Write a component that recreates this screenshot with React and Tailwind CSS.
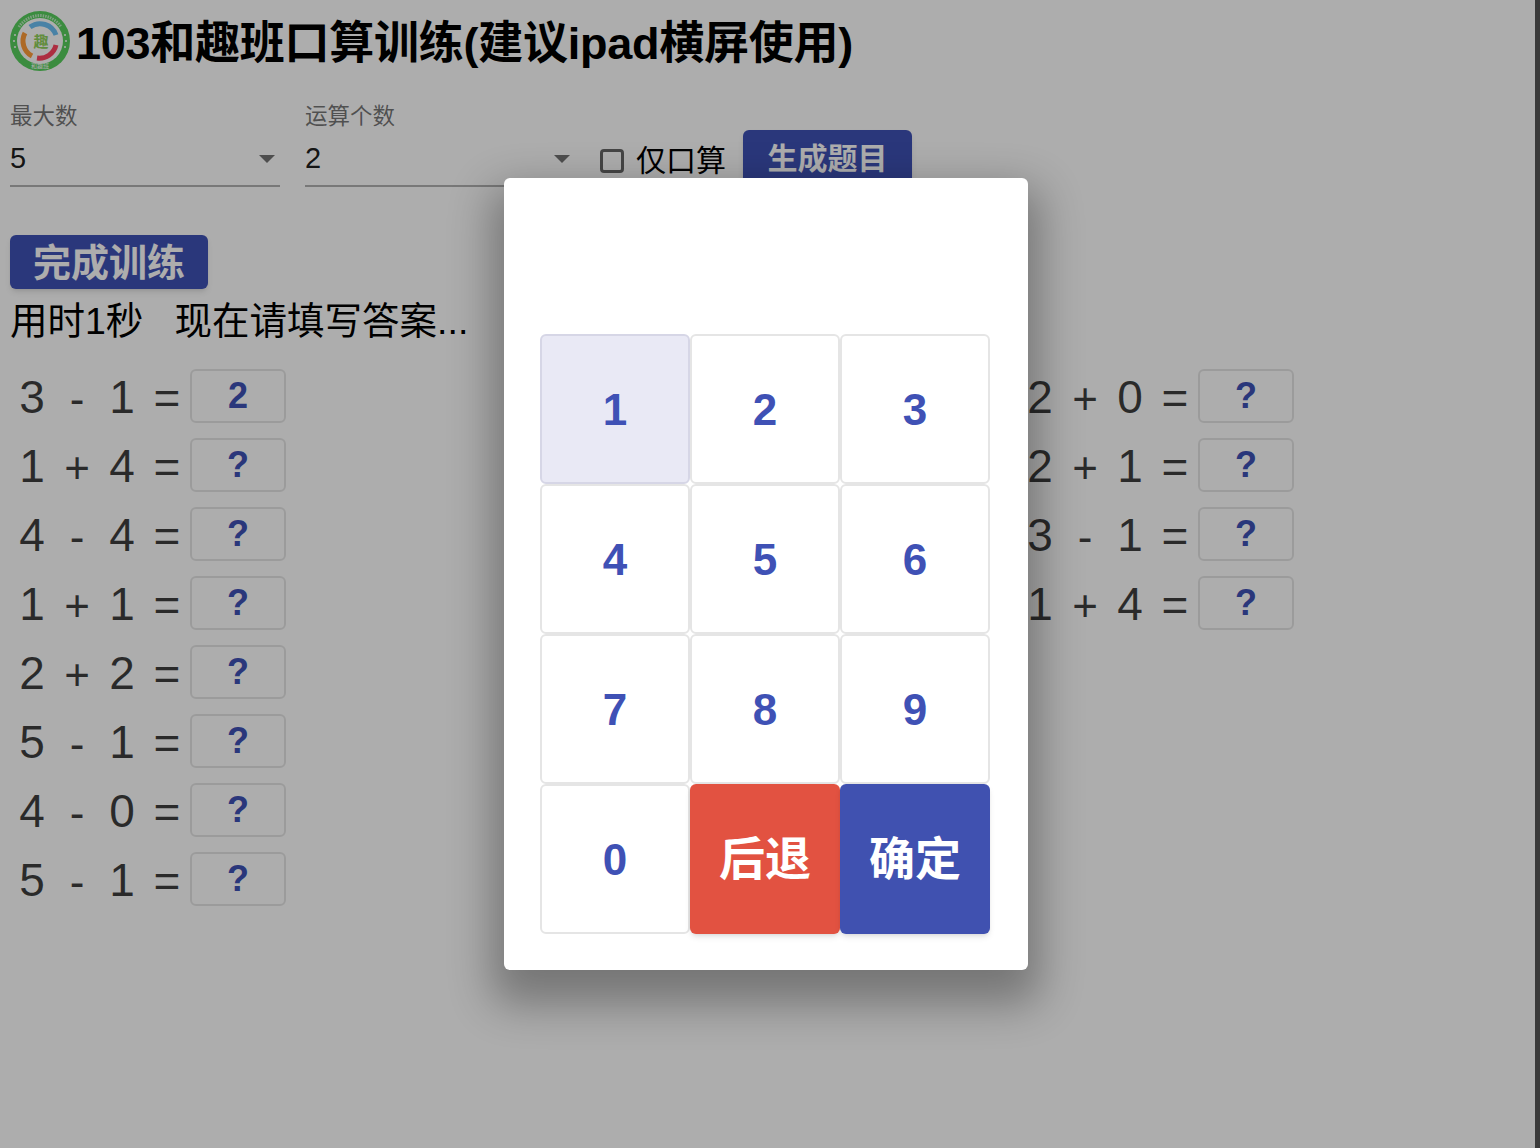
const left = [
  ['3', '-', '1', '2'],
  ['1', '+', '4', '?'],
  ['4', '-', '4', '?'],
  ['1', '+', '1', '?'],
  ['2', '+', '2', '?'],
  ['5', '-', '1', '?'],
  ['4', '-', '0', '?'],
  ['5', '-', '1', '?'],
];

const right = [
  ['2', '+', '0', '?'],
  ['2', '+', '1', '?'],
  ['3', '-', '1', '?'],
  ['1', '+', '4', '?'],
];

const font = "[font-family:'Liberation_Sans','Noto_Sans_CJK_SC',sans-serif]";

const Logo = () => (
  <svg width="60" height="60" viewBox="0 0 60 60" className="mt-[-4px] shrink-0">
    <circle cx="30" cy="30" r="30" fill="#58cf5e" />
    <circle cx="30" cy="30" r="23" fill="#ffffff" />
    <path d="M9 16 A25 25 0 0 1 51 16" fill="none" stroke="#ffffff" strokeOpacity="0.6" strokeWidth="3" strokeDasharray="1.5 1" />
    <path d="M15 22 A17 17 0 0 0 22 45" fill="none" stroke="#ff9c3a" strokeWidth="5" />
    <path d="M20 16 A17 17 0 0 1 46 24" fill="none" stroke="#6cc0f5" strokeWidth="5" />
    <path d="M46 34 A17 17 0 0 1 27 47" fill="none" stroke="#ff4560" strokeWidth="5" />
    <text x="31" y="36" textAnchor="middle" fontSize="15" fontWeight="700" fill="#8fd05a" fontFamily="Noto Sans CJK SC, sans-serif">趣</text>
    <text x="30" y="57" textAnchor="middle" fontSize="6" fill="#ffffff" fontFamily="Noto Sans CJK SC, sans-serif">和趣班</text>
    <circle cx="4" cy="30" r="1" fill="#ffffff" />
    <circle cx="5" cy="24" r="1" fill="#ffffff" />
    <circle cx="5" cy="36" r="1" fill="#ffffff" />
    <circle cx="56" cy="30" r="1" fill="#ffffff" />
    <circle cx="55" cy="24" r="1" fill="#ffffff" />
    <circle cx="55" cy="36" r="1" fill="#ffffff" />
  </svg>
);

const Select = ({ label, value, width }) => (
  <div className={`flex flex-col ${width}`}>
    <span className="text-[22.5px] leading-[30px] text-black/55">{label}</span>
    <div className="mt-[12px] flex h-[43px] items-center justify-between border-b-2 border-black/30 pb-[12px]">
      <span className="text-[29px] text-black/90">{value}</span>
      <span className="mr-[5px] h-0 w-0 border-x-[8px] border-t-[8px] border-x-transparent border-t-black/55" />
    </div>
  </div>
);

const Question = ({ q }) => (
  <div className="flex h-[69px] items-center pl-[10px]">
    <div className="flex w-[180px] items-center pt-[3px] text-[46px] text-black/75">
      <span className="w-[44px] text-center">{q[0]}</span>
      <span className="w-[46px] pt-[4px] text-center text-[44px]">{q[1]}</span>
      <span className="w-[44px] text-center">{q[2]}</span>
      <span className="w-[46px] pt-[2px] text-center">=</span>
    </div>
    <div className="flex h-[54px] w-[96px] items-center justify-center rounded-[6px] border-2 border-black/10 text-[36px] font-bold text-[#3f51b5]">
      {q[3]}
    </div>
  </div>
);

const Key = ({ n, active }) => (
  <button className={`flex h-[150px] w-[150px] items-center justify-center rounded-[6px] border-2 pt-[2px] text-[44px] font-bold text-[#3f51b5] ${active ? 'border-[#d6d6e6] bg-[#e9e9f5]' : 'border-[#e5e5e5] bg-white'}`}>
    {n}
  </button>
);

const App = () => {
  return (
    <div className={`relative h-[1148px] w-[1540px] overflow-hidden bg-white ${font}`}>
      <div className="flex h-[86px] items-center pl-[10px]">
        <Logo />
        <h1 className="ml-[6px] text-[45px] leading-none font-bold tracking-[-0.25px] text-black">103和趣班口算训练(建议ipad横屏使用)</h1>
      </div>

      <div className="mt-[16px] flex items-start pl-[10px]">
        <Select label="最大数" value="5" width="w-[270px] mr-[25px]" />
        <Select label="运算个数" value="2" width="w-[270px] mr-[25px]" />
        <div className="mt-[41px] flex items-center">
          <span className="h-[24px] w-[24px] rounded-[4px] border-[3px] border-black/60" />
          <span className="ml-[12px] text-[30px] leading-[36px] text-black">仅口算</span>
        </div>
        <button className="mt-[28px] ml-[17px] h-[60px] w-[169px] rounded-[6px] bg-[#3f51b5] pb-[4px] text-[30px] font-bold text-white shadow-md">生成题目</button>
      </div>

      <button className="mt-[45px] ml-[10px] block h-[54px] w-[198px] rounded-[6px] bg-[#3f51b5] text-[38px] font-bold text-white shadow-md">完成训练</button>

      <div className="mt-[7px] pl-[10px] text-[37.5px] leading-[50px] whitespace-pre text-black">用时1秒   现在请填写答案...</div>

      <div className="mt-[15px] grid grid-cols-[504px_504px_504px] items-start">
        <div>{left.map((q, i) => <Question key={i} q={q} />)}</div>
        <div />
        <div>{right.map((q, i) => <Question key={i} q={q} />)}</div>
      </div>

      <div className="absolute inset-0 flex items-center justify-center bg-black/[0.32] pr-[8px]">
        <div className="h-[792px] w-[524px] rounded-[6px] bg-white p-[36px] shadow-[0_22px_44px_12px_rgba(0,0,0,0.32)]">
          <div className="h-[120px]" />
          <div className="grid grid-cols-[150px_150px_150px]">
            {[1, 2, 3, 4, 5, 6, 7, 8, 9, 0].map((n) => <Key key={n} n={n} active={n === 1} />)}
            <button className="h-[150px] w-[150px] rounded-[6px] bg-[#e25241] text-[46px] font-bold text-white shadow-md">后退</button>
            <button className="h-[150px] w-[150px] rounded-[6px] bg-[#4051b0] text-[46px] font-bold text-white shadow-md">确定</button>
          </div>
        </div>
      </div>

      <div className="absolute top-0 right-0 bottom-0 w-[5px] bg-[#3a3a3a]" />
    </div>
  );
};

export default App;
